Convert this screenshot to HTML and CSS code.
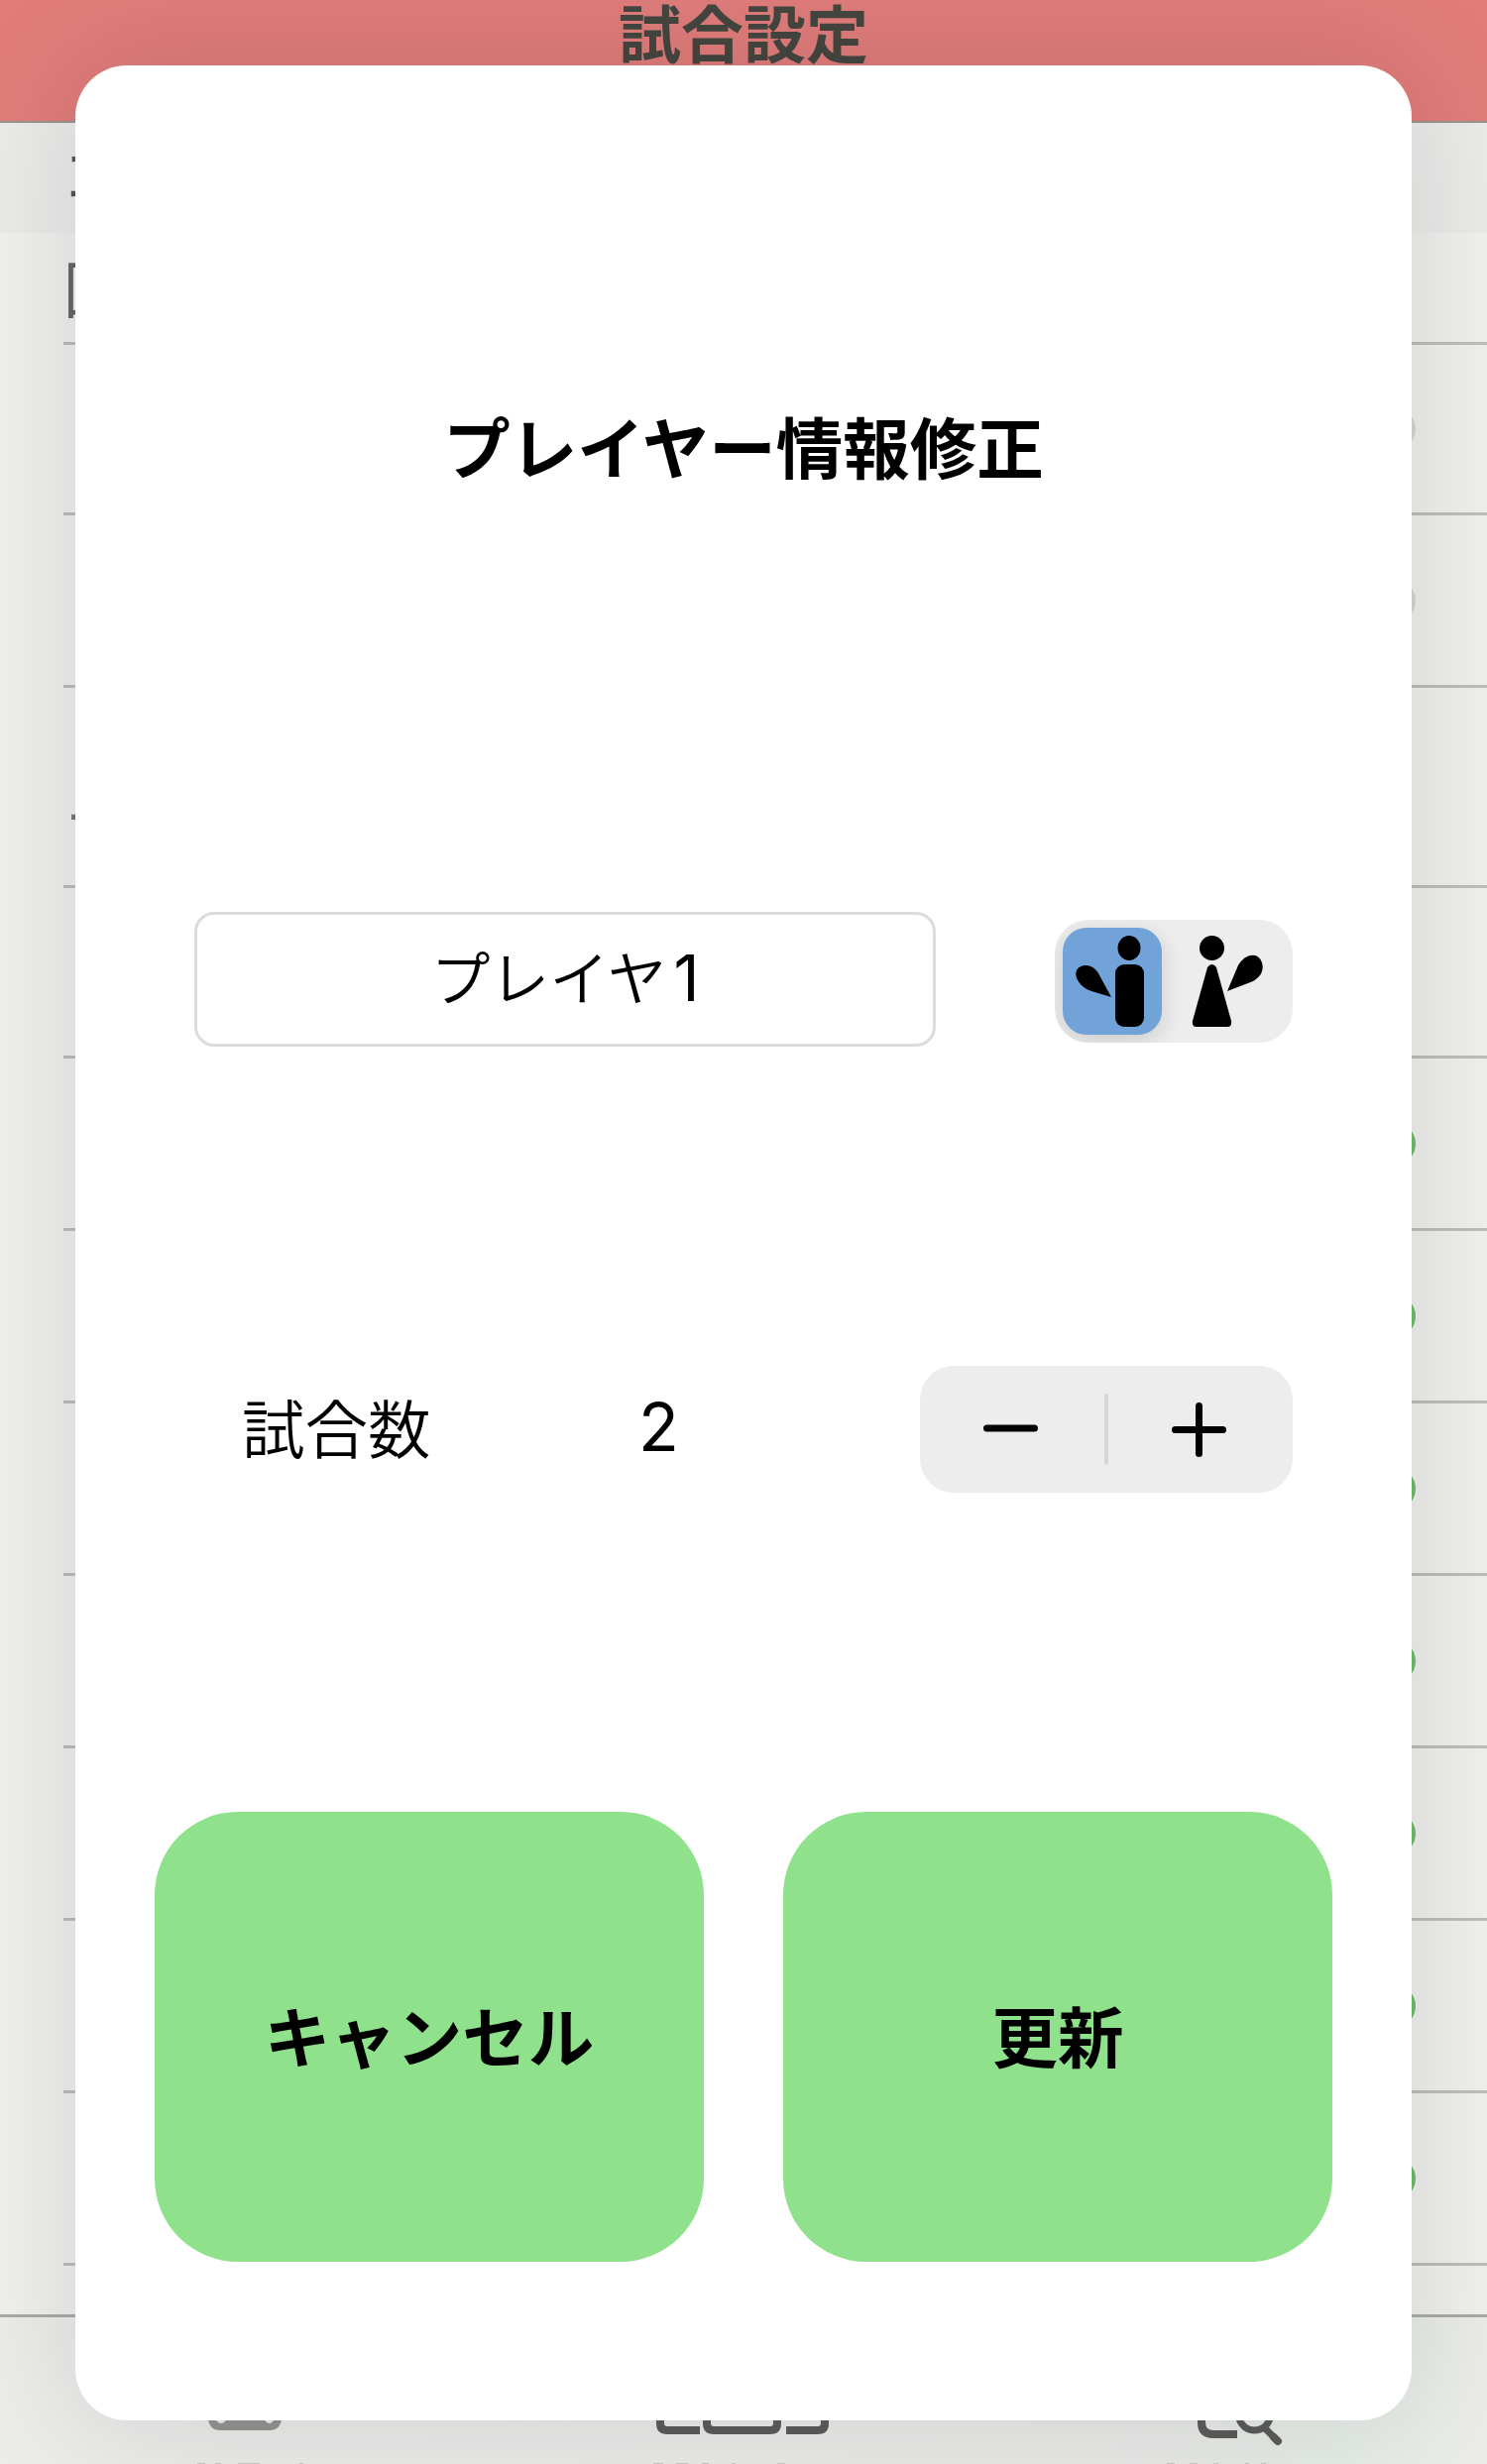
FILE: index.html
```
<!DOCTYPE html>
<html lang="ja">
<head>
<meta charset="utf-8">
<title>試合設定</title>
<link rel="stylesheet" href="styles.css">
</head>
<body>
<div class="screen">
  <header class="navbar"><span class="navbar-title">試合設定</span></header>
  <main class="list">
    <div class="section-head"><span class="section-text">コ</span></div>
    <div class="row row-first"><span class="row-text">回</span></div>
    <div class="row row-a"><i class="knob"></i></div>
    <div class="row row-b"><i class="knob"></i></div>
    <div class="row row-tall"><span class="row-mark">プ</span></div>
    <div class="row row-a"></div>
    <div class="row"><i class="knob knob-on"></i></div>
    <div class="row"><i class="knob knob-on"></i></div>
    <div class="row"><i class="knob knob-on"></i></div>
    <div class="row"><i class="knob knob-on"></i></div>
    <div class="row"><i class="knob knob-on"></i></div>
    <div class="row"><i class="knob knob-on"></i></div>
    <div class="row"><i class="knob knob-on"></i></div>
  </main>
  <footer class="tabbar">
    <svg class="tab-icons" viewBox="0 0 1500 66" width="1500" height="66" fill="none" stroke="#5c5c5b" stroke-width="8">
      <path d="M210 18V20Q211 32 222 32H272Q283 32 284 20V18H277Q276 25 272 25Q267 25 266 18H229Q228 25 223 25Q218 25 217 18Z" fill="#949492" stroke="none"/>
      <path d="M666 18V25Q666 32 673 32H706M713 18V25Q713 32 720 32H777Q784 32 784 25V18M793 32H825Q832 32 832 25V18"/>
      <path d="M1212 18V24Q1212 36 1224 36H1248"/>
      <path d="M1250 20A16 16 0 0 0 1281 20M1277 31L1289 43" stroke-width="7"/>
      <path d="M1285 39L1289 43" stroke-linecap="round"/>
      <path d="M199 65.500H207M217 65.500H223M240 65.500H262M302 65.500H306M659 65.500H669M682 65.500H694M708 65.500H715M738 65.500H742M784 65.500H792M1177 65.500H1185M1200 65.500H1208M1224 65.500H1229M1256 65.500H1260M1272 65.500H1277" stroke="#c6c6c5" stroke-width="1"/>
    </svg>
  </footer>
</div>
<div class="overlay">
  <section class="dialog">
    <h1 class="dialog-title">プレイヤー情報修正</h1>
    <div class="player">
      <div class="name-field"><span class="name-text">プレイヤ<span class="digit">1</span></span></div>
      <div class="segment">
        <div class="segment-item segment-on">
          <svg viewBox="0 0 100 108" width="100" height="108"><ellipse cx="67" cy="20.500" rx="11.500" ry="12.500"/><rect x="53" y="37" width="29" height="63" rx="9"/><path d="M49 70L29 64C17 60 11 49 14 43C18 36 30 36 36 46Z"/></svg>
        </div>
        <div class="segment-item">
          <svg viewBox="0 0 100 108" width="100" height="108"><circle cx="50.500" cy="20.500" r="12.500"/><path d="M46 40Q50.500 34 55 40L70 94Q71 100 66 100H35Q30 100 31 94Z"/><path d="M66 64L77 38C84 26 96 25 100 33C105 43 98 51 92 54Z"/></svg>
        </div>
      </div>
    </div>
    <div class="matches">
      <span class="matches-label">試合数</span>
      <span class="matches-value">2</span>
      <div class="stepper">
        <svg viewBox="0 0 376 128" width="376" height="128" stroke="#000" stroke-width="7" stroke-linecap="round"><path d="M67.500 63H115.500M257.500 64.500H305.500M281.500 40.500V88.500"/><path d="M188 30V98" stroke="#d6d6d9" stroke-width="4"/></svg>
      </div>
    </div>
    <div class="actions">
      <button class="action"><span class="action-text">キャンセル</span></button>
      <button class="action"><span class="action-text">更新</span></button>
    </div>
  </section>
</div>
</body>
</html>
```
FILE: styles.css
```
* { box-sizing: border-box; }
body {
  margin: 0;
  display: grid;
  width: 1500px;
  height: 2486px;
  overflow: hidden;
  font-family: "Noto Sans CJK JP", sans-serif;
  color: #000;
  background: #f0f0ee;
}
.screen, .overlay { grid-area: 1 / 1; height: 2486px; overflow: hidden; }
.screen { display: flex; flex-direction: column; }
.navbar {
  flex: none;
  height: 124px;
  border-bottom: 2px solid #999492;
  background: #e07d7b;
  text-align: center;
}
.navbar-title {
  display: block;
  height: 64px;
  color: #464641;
  font-size: 63px;
  line-height: 62px;
  font-weight: 700;
}
.list { flex: none; }
.section-head {
  height: 111px;
  padding: 19px 0 0 62px;
  background: #ebebea;
  color: #555;
  font-size: 62px;
  line-height: 62px;
}
.row {
  display: flex;
  align-items: center;
  height: 174px;
  margin-left: 64px;
  padding-left: 1320px;
  border-bottom: 3px solid #bdbdbc;
}
.row-first { height: 113px; padding: 0 0 3px; }
.row-first .row-text { font-size: 62px; line-height: 62px; color: #666; }
.row-a { height: 172px; }
.row-tall { height: 202px; padding: 88px 0 0 0; }
.row-mark { font-size: 62px; line-height: 62px; color: #777; }
.knob { width: 44px; height: 44px; border-radius: 50%; background: #d7d7d6; }
.knob-on { background: #6fbd6b; }
.tabbar {
  flex: 1;
  margin-top: 49px;
  padding-top: 82px;
  border-top: 3px solid #aaaaa8;
  background: linear-gradient(90deg, #ececeb, #eaeae9 75%, #e6ede7 90%, #ebecea);
}
.tab-icons { display: block; }
.overlay { position: relative; padding: 66px 76px 44px; }
.dialog {
  display: flex;
  flex-direction: column;
  height: 2376px;
  padding: 0 80px;
  border-radius: 52px;
  background: #fff;
  box-shadow: 0 0 130px rgba(0, 0, 0, .13);
}
.dialog-title {
  margin: 345px 0 0;
  font-size: 67.500px;
  line-height: 76px;
  font-weight: 700;
  text-align: center;
  white-space: nowrap;
}
.player {
  display: flex;
  justify-content: space-between;
  align-items: center;
  margin: 433px 40px 0;
  height: 136px;
}
.name-field {
  display: flex;
  align-items: center;
  justify-content: center;
  width: 748px;
  height: 136px;
  border: 3px solid #dcdcdc;
  border-radius: 20px;
}
.name-text {
  padding-bottom: 5px;
  font-size: 60px;
  line-height: 80px;
  font-weight: 350;
}
.digit { margin-left: 7px; font-family: Inter, sans-serif; font-size: 64px; font-weight: 400; }
.segment {
  display: flex;
  width: 240px;
  height: 124px;
  margin-top: 4px;
  padding: 8px;
  border-radius: 34px;
  background: #ededed;
  overflow: hidden;
}
.segment-item { width: 100px; height: 108px; border-radius: 24px; }
.segment-item svg { display: block; overflow: visible; }
.segment-on { background: #71a2d8; box-shadow: 0 6px 22px rgba(0, 0, 0, .14); }
.matches {
  display: grid;
  grid-template-columns: 190px 1fr 376px;
  align-items: center;
  margin: 322px 40px 0 88px;
  height: 128px;
}
.matches-label {
  padding-bottom: 9px;
  font-size: 63.500px;
  line-height: 80px;
  font-weight: 350;
  white-space: nowrap;
}
.matches-value {
  padding: 0 0 4px 210px;
  font-family: Inter, sans-serif;
  font-size: 67px;
  line-height: 80px;
}
.stepper { height: 128px; border-radius: 34px; background: #ededed; }
.stepper svg { display: block; }
.actions { display: flex; gap: 80px; margin-top: 322px; }
.action {
  width: 554px;
  height: 454px;
  padding: 0 0 6px;
  border: 0;
  border-radius: 84px;
  background: #8fe18c;
  color: #000;
  font-family: inherit;
  font-size: 66.500px;
  line-height: 80px;
  font-weight: 700;
}
```
